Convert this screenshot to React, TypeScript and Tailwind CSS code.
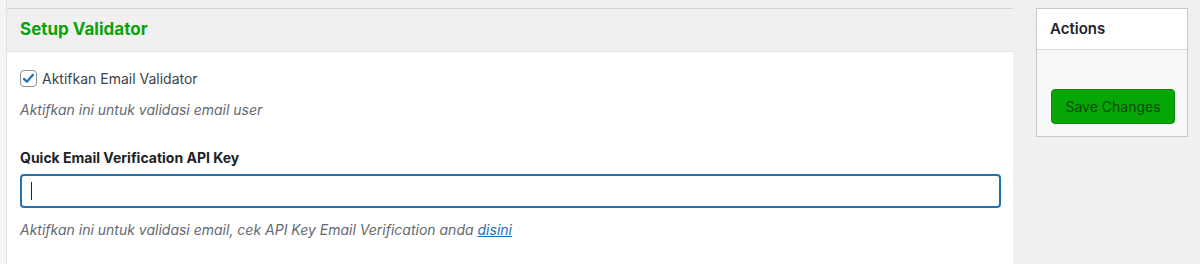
import { useState } from "react";

export default function App() {
  const [enabled, setEnabled] = useState(true);

  return (
    <div
      className="flex h-[264px] w-[1200px] overflow-hidden bg-[#f0f0f1] text-[14px] text-[#3c434a]"
      style={{ fontFamily: "Inter, 'Noto Sans', sans-serif" }}
    >
      {/* left edge of the neighbour panel */}
      <div className="w-[7px] shrink-0 border-r border-[#e2e2e4] bg-[#f4f4f5]" />

      {/* Setup panel */}
      <div className="mt-[8px] flex w-[1006px] shrink-0 flex-col border-t border-[#d4d4d6]">
        <div className="flex h-[43px] items-center border-b border-[#e6e6e8] bg-[#f0f0f1] px-[13px]">
          <h2 className="text-[17px] font-bold text-[#0da10d]">Setup Validator</h2>
        </div>
        <div className="flex-1 bg-white px-[13px] pt-[16px]">
          <label className="flex items-center gap-[5px]">
            <span
              onClick={() => setEnabled(!enabled)}
              className="flex h-[17px] w-[17px] items-center justify-center rounded-[4px] border border-[#8c8f94] bg-white"
            >
              {enabled && (
                <svg viewBox="0 0 16 16" className="h-[13px] w-[13px]">
                  <path d="M2.5 8.5l3.5 3.5 7.5-8.5" fill="none" stroke="#2271b1" strokeWidth="2.8" strokeLinecap="round" strokeLinejoin="round" />
                </svg>
              )}
            </span>
            <span>Aktifkan Email Validator</span>
          </label>
          <p className="mt-[10px] italic text-[#646970]">Aktifkan ini untuk validasi email user</p>

          <h3 className="mt-[27px] font-bold text-[#1d2327]">Quick Email Verification API Key</h3>
          <div className="mt-[6px] flex h-[34px] w-[981px] items-center rounded-[4px] border-2 border-[#2271b1] px-[9px]">
            <span className="h-[18px] w-px bg-[#1d2327]" />
          </div>
          <p className="mt-[11px] italic text-[#646970]">
            Aktifkan ini untuk validasi email, cek API Key Email Verification anda{" "}
            <a href="#" className="text-[#2271b1] underline">disini</a>
          </p>
        </div>
      </div>

      {/* Actions box */}
      <div className="ml-[23px] mt-[8px] flex h-[129px] w-[152px] shrink-0 flex-col border border-[#c9c9cc]">
        <div className="flex h-[41px] items-center border-b border-[#dcdcde] bg-white px-[13px]">
          <h3 className="text-[15px] font-semibold text-[#1d2327]">Actions</h3>
        </div>
        <div className="flex-1 bg-[#f6f7f7] px-[14px] pt-[39px]">
          <button className="h-[35px] w-[124px] rounded-[4px] border border-[#0b8a0b] bg-[#05a605] text-[14px] text-[#0c4a0c]">
            Save Changes
          </button>
        </div>
      </div>
    </div>
  );
}
